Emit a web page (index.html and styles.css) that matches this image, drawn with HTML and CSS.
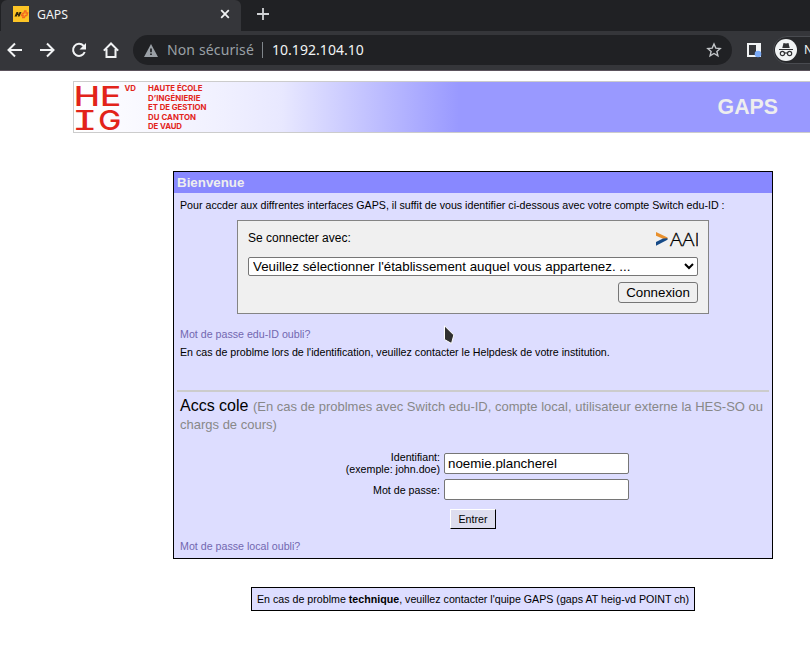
FILE: index.html
```html
<!DOCTYPE html>
<html lang="fr">
<head>
<meta charset="utf-8">
<title>GAPS</title>
<link rel="stylesheet" href="styles.css">
</head>
<body>
<header class="browser">
  <div class="tabs">
    <div class="tab">
      <svg class="favicon" width="16" height="16" viewBox="0 0 16 16"><rect width="16" height="16" fill="#fdc526"/><path d="M1.500 10.500L3.500 6h2l-.6 1.500h1L6.500 6h2l-2 4.500H4.700l.6-1.500h-.9l-.7 1.500z" fill="#33270b"/><path d="M8.500 9.500l.8-2h1.500l.8-2.500H13v2h1.700L13.800 9.500h-1.400l-1 2H9.700l.5-2z" fill="#fdc526" stroke="#f4671f" stroke-width="1.300"/></svg>
      <span class="tab-title">GAPS</span>
      <svg width="10" height="10" viewBox="0 0 10 10"><path d="M1.200 1.200l7.600 7.600M8.800 1.200L1.200 8.800" stroke="#f1f3f4" stroke-width="1.800"/></svg>
    </div>
    <svg class="new-tab" width="12" height="12" viewBox="0 0 12 12"><path d="M6 0v12M0 6h12" stroke="#d0d2d5" stroke-width="1.800"/></svg>
  </div>
  <div class="toolbar">
    <svg class="nav" width="16" height="16" viewBox="0 0 16 16"><path d="M15 8H2M8 1.500L1.500 8 8 14.500" fill="none" stroke="#f1f3f4" stroke-width="2"/></svg>
    <svg class="nav" width="16" height="16" viewBox="0 0 16 16"><path d="M1 8h13M8 1.500L14.500 8 8 14.500" fill="none" stroke="#f1f3f4" stroke-width="2"/></svg>
    <svg class="nav" width="16" height="16" viewBox="0 0 16 16"><path d="M13.700 10a6 6 0 1 1-1.200-6.200L14 5.500" fill="none" stroke="#f1f3f4" stroke-width="2"/><path d="M15 1v6.500H8.500z" fill="#f1f3f4"/></svg>
    <svg class="nav" width="16" height="16" viewBox="0 0 16 16"><path d="M.8 8.600L8 1.500l7.200 7.100M3.500 7v8h9V7" fill="none" stroke="#f1f3f4" stroke-width="2"/></svg>
    <div class="omnibox">
      <svg width="14" height="13" viewBox="0 0 14 13"><path d="M7 0l7 13H0z" fill="#9aa0a6"/><path d="M7 4.500v3.700M7 9.400v1.700" stroke="#202124" stroke-width="1.700"/></svg>
      <span class="unsafe">Non sécurisé</span>
      <span class="url">10.192.104.10</span>
      <svg class="star" width="16" height="16" viewBox="0 0 16 16"><path d="M8 2l1.800 4.100 4.400.4-3.300 3 1 4.300L8 11.500l-3.900 2.300 1-4.300-3.300-3 4.400-.4z" fill="none" stroke="#c4c7ca" stroke-width="1.400"/></svg>
    </div>
    <svg class="panel-icon" width="15" height="15" viewBox="0 0 15 15"><path d="M0 0h14v14H0zM2 2v10h7V2z" fill="#f1f3f4" fill-rule="evenodd"/><circle cx="11" cy="11" r="3.300" fill="#7baaf7"/></svg>
    <div class="profile">
      <svg width="22" height="22" viewBox="0 0 22 22"><circle cx="11" cy="11" r="11" fill="#f1f3f4"/><path d="M7.300 9l1.200-5 2.500.6 2.500-.6 1.200 5z" fill="#303134"/><path d="M4 10.500h14M9.500 14.300q1.500-1 3 0" fill="none" stroke="#303134" stroke-width="1.200"/><circle cx="7.400" cy="14.500" r="2.100" fill="none" stroke="#303134" stroke-width="1.200"/><circle cx="14.600" cy="14.500" r="2.100" fill="none" stroke="#303134" stroke-width="1.200"/></svg>
      <span class="profile-name">N</span>
    </div>
  </div>
</header>

<div class="banner">
  <svg class="logo" width="140" height="50" viewBox="0 0 140 50">
    <g fill="#e2231a" font-family="Inter, sans-serif">
      <text class="mono" transform="translate(-.2 23.500)" textLength="47.500" lengthAdjust="spacingAndGlyphs">HE</text>
      <text class="slab" transform="translate(-2 47.500) scale(1.580 1)">I</text>
      <text class="mono" transform="translate(24.300 47.500)" textLength="23" lengthAdjust="spacingAndGlyphs">G</text>
      <text class="small" x="50.500" y="9" textLength="11.500">VD</text>
      <text class="small" x="74" y="9" textLength="54.500">HAUTE ÉCOLE</text>
      <text class="small" x="74" y="18.600" textLength="52.500">D’INGÉNIERIE</text>
      <text class="small" x="74" y="28.200" textLength="58.500">ET DE GESTION</text>
      <text class="small" x="74" y="37.800" textLength="48">DU CANTON</text>
      <text class="small" x="74" y="47.400" textLength="34">DE VAUD</text>
    </g>
  </svg>
  <h1>GAPS</h1>
</div>

<main>
  <section class="card">
    <h2>Bienvenue</h2>
    <p class="intro">Pour accder aux diffrentes interfaces GAPS, il suffit de vous identifier ci-dessous avec votre compte Switch edu-ID :</p>
    <form class="wayf">
      <div class="wayf-head">
        <span>Se connecter avec:</span>
        <svg class="aai-logo" width="43" height="16" viewBox="0 0 43 16"><path d="M1 1l11.500 5.400v1.800L8 7.800 1 4.700z" fill="#e9902c"/><path d="M12.500 7.300v1.500L1 14.800v-3.700l7-3.700z" fill="#164a87"/><text class="aai" x="15" y="14.700" textLength="29.500" lengthAdjust="spacingAndGlyphs">AAI</text></svg>
      </div>
      <select><option>Veuillez sélectionner l'établissement auquel vous appartenez. ...</option></select>
      <button type="button" class="connect">Connexion</button>
    </form>
    <a class="link edu">Mot de passe edu-ID oubli?</a>
    <p class="help">En cas de problme lors de l'identification, veuillez contacter le Helpdesk de votre institution.</p>
    <div class="rule"></div>
    <h3>Accs cole <span>(En cas de problmes avec Switch edu-ID, compte local, utilisateur externe la HES-SO ou chargs de cours)</span></h3>
    <form class="login">
      <label for="user">Identifiant:<br>(exemple: john.doe)</label>
      <input id="user" type="text" value="noemie.plancherel">
      <label for="pass">Mot de passe:</label>
      <input id="pass" type="password">
      <button type="button" class="enter">Entrer</button>
    </form>
    <a class="link">Mot de passe local oubli?</a>
  </section>
  <p class="contact">En cas de problme <b>technique</b>, veuillez contacter l'quipe GAPS (gaps AT heig-vd POINT ch)</p>
</main>
<svg class="cursor" width="13" height="20" viewBox="0 0 13 20"><path d="M1.500 .8l9.300 9.200-2.300 8.500-7-4z" fill="#303030" stroke="#fff" stroke-width="1"/></svg>
</body>
</html>
```

FILE: styles.css
```css
* { box-sizing: border-box; }
body {
  margin: 0;
  height: 648px;
  overflow: hidden;
  background: #fff;
  color: #000;
  font: 10.67px/12px "Liberation Sans", sans-serif;
}
h1, h2, h3, p { margin: 0; }
svg { flex: none; display: block; }

.browser { background: #202124; font-family: "Noto Sans", sans-serif; height: 71px; border-bottom: 1px solid #5b525c; }
.tabs { display: flex; align-items: center; height: 31px; }
.tab {
  display: flex;
  align-items: center;
  width: 240px;
  height: 31px;
  margin-left: 1px;
  padding: 0 11px 3px 12px;
  background: #35363a;
  border-radius: 6px 6px 0 0;
}
.tab-title { flex: 1; margin-left: 8px; padding-top: 1px; color: #f1f3f4; font-size: 12.3px; line-height: 16px; }
.new-tab { margin: 0 0 3px 16px; }
.toolbar { display: flex; align-items: center; height: 39px; padding: 0 0 1px 7px; background: #35363a; overflow: hidden; }
.nav { margin-right: 16px; }
.omnibox {
  display: flex;
  align-items: center;
  width: 599px;
  height: 30px;
  margin-left: -2px;
  padding: 0 10px 0 11px;
  border-radius: 15px;
  background: #202124;
  font-size: 14px;
  line-height: 18px;
  white-space: nowrap;
  flex: none;
}
.unsafe { margin-left: 9px; padding-right: 8px; border-right: 1px solid #80868b; color: #9aa0a6; line-height: 16px; letter-spacing: .13px; }
.url { margin-left: 9px; color: #f1f3f4; letter-spacing: .05px; }
.star { margin-left: auto; }
.panel-icon { margin-left: 15px; }
.profile {
  display: flex;
  align-items: center;
  flex: none;
  width: 60px;
  height: 28px;
  margin-left: 11px;
  padding: 0 1px;
  border: 1px solid #494b50;
  border-radius: 14px 0 0 14px;
  background: #27282b;
}
.profile-name { margin-left: 7px; color: #f1f3f4; font-size: 12px; white-space: nowrap; }

.banner {
  display: flex;
  align-items: center;
  justify-content: space-between;
  height: 52px;
  margin: 10px -1px 0 73px;
  padding-right: 32px;
  border: 1px solid #ccc;
  background: linear-gradient(90deg, #fff 0, #f0f0ff 150px, #e8e8ff 208px, #c8c8ff 280px, #99f 385px);
}
.mono { font-size: 27px; font-weight: 500; }
.slab { font: 500 27px "DejaVu Sans Mono", monospace; }
.small { font-size: 7.800px; font-weight: 700; }
h1 { color: #eee; font-size: 21.33px; line-height: 24px; }

.card {
  width: 600px;
  height: 388px;
  margin: 38px 0 0 173px;
  border: 1px solid #000;
  background: #ddf;
}
h2 { height: 21px; padding-left: 3px; background: #88f; color: #eee; font-size: 13.33px; line-height: 21px; }
.intro { margin: 6px 0 9px 6px; white-space: nowrap; }
.wayf {
  display: flex;
  flex-direction: column;
  width: 472px;
  height: 94px;
  margin-left: 63px;
  padding: 10px;
  border: 1px solid #848484;
  background: #f0f0f0;
}
.wayf-head { display: flex; justify-content: space-between; height: 26px; font-size: 12px; line-height: 14px; }
.aai { font: 300 19px "Open Sans", sans-serif; stroke: #000; stroke-width: .3px; }
select { width: 450px; height: 19px; font: 13.33px "Liberation Sans", sans-serif; background: #fff; color: #000; border: 1px solid #767676; border-radius: 2px; }
.connect {
  align-self: flex-end;
  width: 80px;
  height: 21px;
  margin-top: 6px;
  padding: 0;
  border: 1px solid #767676;
  border-radius: 3px;
  background: #efefef;
  font: 13.33px "Liberation Sans", sans-serif;
}
.link { display: block; margin-left: 6px; color: #7268b0; }
.edu { margin-top: 14px; }
.help { margin: 6px 0 32px 6px; }
.rule { height: 2px; margin: 0 3px; background: #ccc; }
h3 { height: 42px; margin: 5px 0 0 6px; font-size: 16px; line-height: 18px; font-weight: 400; }
h3 span { color: #888; font-size: 13px; line-height: 15px; }
.login { display: grid; grid-template-columns: 266px 185px; column-gap: 4px; row-gap: 5px; align-items: center; margin-top: 14px; }
.login label { text-align: right; line-height: 12px; }
.login input { width: 185px; height: 21px; padding: 1px 3px; border: 1px solid #767676; border-radius: 2px; font: 13.33px "Liberation Sans", sans-serif; background: #fff; }
.login label:first-child { height: 21px; margin-top: -5px; }
.enter {
  grid-column: 2;
  width: 46px;
  height: 20px;
  margin: 4px 0 0 6px;
  padding: 0;
  border: 1px solid;
  border-color: #fff #000 #000 #fff;
  background: #dde;
  font: 10.67px "Liberation Sans", sans-serif;
}
.login + .link { margin-top: 11px; }
.contact { width: 444px; height: 24px; margin: 28px 0 0 251px; padding: 5px; border: 1px solid #000; background: #ddf; white-space: nowrap; }
.cursor { position: absolute; left: 443px; top: 325px; }
```
